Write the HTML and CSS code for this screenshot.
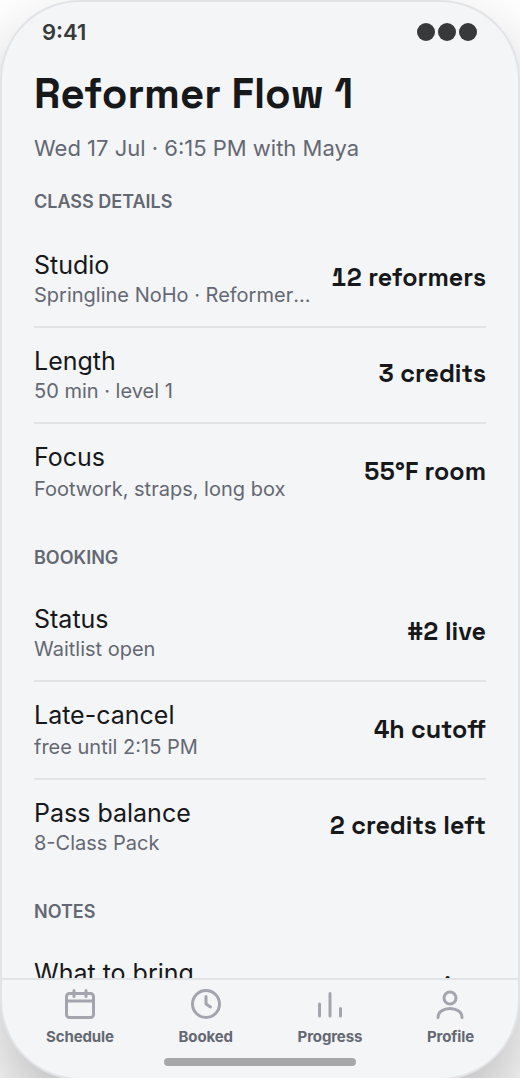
FILE: index.html
```html
<!DOCTYPE html>
<html lang="en">
<head>
<meta charset="utf-8">
<title>Reformer Flow 1</title>
<link rel="stylesheet" href="styles.css">
</head>
<body>
<div class="stage">
<div class="phone">
  <header class="status-bar">
    <span class="time">9:41</span>
    <span class="dots"><i></i><i></i><i></i></span>
  </header>
  <main class="content">
    <h1 class="title">Reformer Flow 1</h1>
    <p class="subtitle">Wed 17 Jul · 6:15 PM with Maya</p>
    <h2 class="section first">CLASS DETAILS</h2>
    <div class="row">
      <div class="info"><div class="label">Studio</div><div class="detail">Springline NoHo · Reformer Room</div></div>
      <div class="value">12 reformers</div>
    </div>
    <div class="row">
      <div class="info"><div class="label">Length</div><div class="detail">50 min · level 1</div></div>
      <div class="value">3 credits</div>
    </div>
    <div class="row loose last">
      <div class="info"><div class="label">Focus</div><div class="detail">Footwork, straps, long box</div></div>
      <div class="value">55°F room</div>
    </div>
    <h2 class="section">BOOKING</h2>
    <div class="row">
      <div class="info"><div class="label">Status</div><div class="detail">Waitlist open</div></div>
      <div class="value">#2 live</div>
    </div>
    <div class="row loose">
      <div class="info"><div class="label">Late-cancel</div><div class="detail">free until 2:15 PM</div></div>
      <div class="value">4h cutoff</div>
    </div>
    <div class="row last">
      <div class="info"><div class="label">Pass balance</div><div class="detail">8-Class Pack</div></div>
      <div class="value">2 credits left</div>
    </div>
    <h2 class="section">NOTES</h2>
    <div class="row last">
      <div class="info"><div class="label">What to bring</div></div>
      <div class="value spaced">grips</div>
    </div>
  </main>
  <nav class="tabs">
    <div class="tab"><svg viewBox="0 0 24 24"><rect x="3" y="5" width="18" height="16" rx="2"/><path d="M3 10h18M8 3v4M16 3v4"/></svg><span>Schedule</span></div>
    <div class="tab"><svg viewBox="0 0 24 24"><circle cx="12" cy="12" r="9"/><path d="M12 7v5l3 2"/></svg><span>Booked</span></div>
    <div class="tab"><svg viewBox="0 0 24 24"><path d="M5 20v-8M12 20V5M19 20v-5"/></svg><span>Progress</span></div>
    <div class="tab"><svg viewBox="0 0 24 24"><circle cx="12" cy="8" r="4"/><path d="M4 21c0-4 4-6 8-6s8 2 8 6"/></svg><span>Profile</span></div>
  </nav>
  <div class="home"></div>
</div>
</div>
</body>
</html>
```
FILE: styles.css
```css
* { box-sizing: border-box; }
body { margin: 0; background: #fff; font-family: Inter, sans-serif; color: #17181a; }
.stage { height: 1078px; overflow: hidden; }
.phone { width: 520px; height: 1080px; border: 2px solid #e2e3e6; border-radius: 80px; background: #f4f5f7; overflow: hidden; display: flex; flex-direction: column; box-shadow: 0 40px 80px rgba(0,0,0,.28); }
.status-bar { flex: none; height: 60px; padding: 0 41px 0 40px; display: flex; justify-content: space-between; align-items: center; }
.time { font-size: 22px; font-weight: 600; line-height: 28px; color: #38393b; }
.dots { display: flex; gap: 3px; }
.dots i { width: 18px; height: 18px; border-radius: 50%; background: #38393b; }
.content { flex: none; height: 916px; padding: 6px 32px 0; overflow: hidden; }
.title { margin: 0; font-family: "Space Grotesk", Inter, sans-serif; font-size: 42px; line-height: 52px; font-weight: 700; white-space: nowrap; }
.subtitle { margin: 14px 0 0; font-size: 22px; line-height: 28px; color: #646872; }
.section { margin: 24px 0 16px; font-size: 18px; line-height: 24px; font-weight: 600; color: #646872; }
.first { margin: 28px 0 18px; }
.row { height: 96px; border-bottom: 2px solid #e2e3e6; display: flex; align-items: center; justify-content: space-between; gap: 20px; }
.loose { height: 98px; }
.last { border-bottom-color: transparent; }
.info { min-width: 0; min-height: 60px; }
.label { font-size: 25px; line-height: 32px; white-space: nowrap; }
.detail { font-size: 20px; line-height: 28px; color: #646872; white-space: nowrap; overflow: hidden; text-overflow: ellipsis; }
.loose .detail { margin-top: 2px; }
.value { flex: none; padding-bottom: 4px; font-family: "Space Grotesk", Inter, sans-serif; font-size: 25px; line-height: 32px; font-weight: 600; font-variant-numeric: tabular-nums; white-space: nowrap; }
.loose .value { padding-bottom: 2px; }
.spaced { letter-spacing: 2px; }
.tabs { flex: none; height: 80px; border-top: 2px solid #e2e3e6; padding: 6px 44px 0; display: flex; justify-content: space-between; }
.tab { height: 60px; display: flex; flex-direction: column; align-items: center; gap: 6px; font-size: 15px; line-height: 18px; font-weight: 700; letter-spacing: -.12px; color: #646872; }
.tab svg { width: 36px; height: 36px; fill: none; stroke: #a3a5ae; stroke-width: 2; stroke-linecap: round; stroke-linejoin: round; }
.home { flex: none; align-self: center; width: 192px; height: 8px; border-radius: 4px; background: #a5a7a9; }
```
